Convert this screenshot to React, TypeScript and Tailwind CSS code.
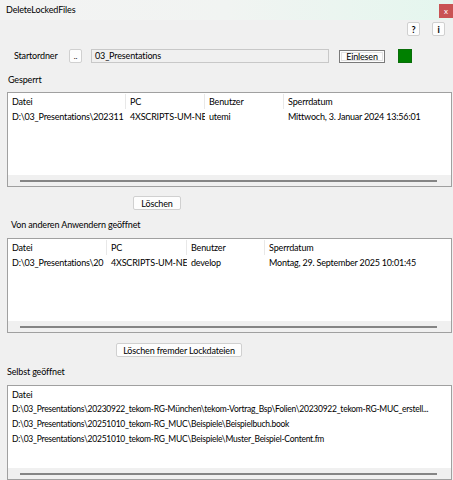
import React from "react";

const font = { fontFamily: 'Lato, "Noto Sans", sans-serif' };

function Btn({ children, className = "" }: { children: React.ReactNode; className?: string }) {
  return (
    <div
      className={
        "flex items-center justify-center whitespace-nowrap bg-[#fdfdfd] border border-[#d0d0d0] rounded-[2px] leading-none text-black " +
        className
      }
    >
      {children}
    </div>
  );
}

function ScrollBar() {
  return (
    <div className="h-[11px] bg-[#f0f0f0] flex items-center pl-[12px] pr-[14px]">
      <div className="h-[2px] w-full bg-[#858585]" />
    </div>
  );
}

function Table({
  cols,
  rows,
  heightClass,
  rowClass = "",
}: {
  cols: { name: string; w?: number }[];
  rows: string[][];
  heightClass: string;
  rowClass?: string;
}) {
  return (
    <div className={"ml-[7px] mr-[1px] border border-[#a0a0a0] bg-white flex flex-col " + heightClass}>
      <div className="flex-1 pt-[1px] overflow-hidden">
        <div className="flex h-[15px] items-center">
          {cols.map((c, i) => (
            <div
              key={i}
              className={
                "h-[15px] flex items-center pl-[4px] whitespace-nowrap overflow-hidden " +
                (i < cols.length - 1 ? "border-r border-[#e8e8e8] shrink-0" : "flex-1")
              }
              style={c.w ? { width: c.w } : undefined}
            >
              {c.name}
            </div>
          ))}
        </div>
        {rows.map((r, ri) => (
          <div key={ri} className={"flex h-[15px] items-center " + rowClass}>
            {r.map((cell, i) => (
              <div
                key={i}
                className={
                  "h-[15px] pl-[4px] whitespace-nowrap overflow-hidden leading-[15px] " +
                  (i < cols.length - 1 ? "shrink-0" : "flex-1")
                }
                style={cols[i].w ? { width: cols[i].w } : undefined}
              >
                {cell}
              </div>
            ))}
          </div>
        ))}
      </div>
      <ScrollBar />
    </div>
  );
}

export default function App() {
  return (
    <div
      className="w-[453px] h-[480px] overflow-hidden bg-[#f0f0f0] text-[9px] tracking-[-0.15px] text-black flex flex-col"
      style={font}
    >
      {/* title bar */}
      <div className="h-[20px] shrink-0 flex items-center bg-gradient-to-r from-[#f3f3f3] via-[#f1f4f2] to-[#e4f6ee] relative">
        <span className="ml-[6px]">DeleteLockedFiles</span>
        <div className="absolute right-0 top-[4px] w-[14px] h-[14px] bg-[#c95353] flex items-center justify-center text-white text-[8px] leading-none">
          x
        </div>
      </div>

      {/* help buttons */}
      <div className="flex justify-end gap-[12px] pr-[8px] mt-[2px]">
        <Btn className="w-[13px] h-[14px] font-bold text-[9px]">?</Btn>
        <Btn className="w-[13px] h-[14px] font-bold text-[9px]">i</Btn>
      </div>

      {/* Startordner row */}
      <div className="flex items-center mt-[13px] h-[14px]">
        <span className="ml-[14px] w-[55px]">Startordner</span>
        <Btn className="w-[13px] h-[14px] text-[8px]">..</Btn>
        <div className="ml-[9px] w-[238px] h-[14px] border border-[#c8c8c8] bg-[#f0f0f0] flex items-center pl-[3px]">
          03_Presentations
        </div>
        <div className="ml-[10px] w-[46px] h-[13px] border border-[#7a7a7a] bg-[#fdfdfd] flex items-center justify-center p-[1px]">
          <div className="w-full h-full border border-[#e2e2e2] flex items-center justify-center leading-none">
            Einlesen
          </div>
        </div>
        <div className="ml-[13px] w-[14px] h-[14px] bg-[#008000] border border-[#0a6e0a]" />
      </div>

      <div className="ml-[8px] mt-[10px] h-[14px] flex items-center">Gesperrt</div>

      <div className="mt-[5px]">
        <Table
          heightClass="h-[95px]"
          rowClass="tracking-[-0.2px]"
          cols={[{ name: "Datei", w: 118 }, { name: "PC", w: 79 }, { name: "Benutzer", w: 79 }, { name: "Sperrdatum" }]}
          rows={[["D:\\03_Presentations\\202311", "4XSCRIPTS-UM-NE", "utemi", "Mittwoch, 3. Januar 2024 13:56:01"]]}
        />
      </div>

      <div className="flex mt-[9px]">
        <Btn className="ml-[133px] w-[48px] h-[14px]">Löschen</Btn>
      </div>

      <div className="ml-[11px] mt-[8px] h-[14px] flex items-center">Von anderen Anwendern geöffnet</div>

      <div className="mt-[6px]">
        <Table
          heightClass="h-[95px]"
          rowClass="tracking-[-0.2px]"
          cols={[{ name: "Datei", w: 99 }, { name: "PC", w: 80 }, { name: "Benutzer", w: 78 }, { name: "Sperrdatum" }]}
          rows={[["D:\\03_Presentations\\20", "4XSCRIPTS-UM-NE", "develop", "Montag, 29. September 2025 10:01:45"]]}
        />
      </div>

      <div className="flex mt-[10px]">
        <Btn className="ml-[116px] w-[126px] h-[14px]">Löschen fremder Lockdateien</Btn>
      </div>

      <div className="ml-[7px] mt-[8px] h-[14px] flex items-center">Selbst geöffnet</div>

      <div className="mt-[6px]">
        <Table
          heightClass="h-[95px]"
          rowClass="text-[8.5px] tracking-[-0.25px]"
          cols={[{ name: "Datei" }]}
          rows={[
            ["D:\\03_Presentations\\20230922_tekom-RG-München\\tekom-Vortrag_Bsp\\Folien\\20230922_tekom-RG-MUC_erstell..."],
            ["D:\\03_Presentations\\20251010_tekom-RG_MUC\\Beispiele\\Beispielbuch.book"],
            ["D:\\03_Presentations\\20251010_tekom-RG_MUC\\Beispiele\\Muster_Beispiel-Content.fm"],
          ]}
        />
      </div>
    </div>
  );
}
